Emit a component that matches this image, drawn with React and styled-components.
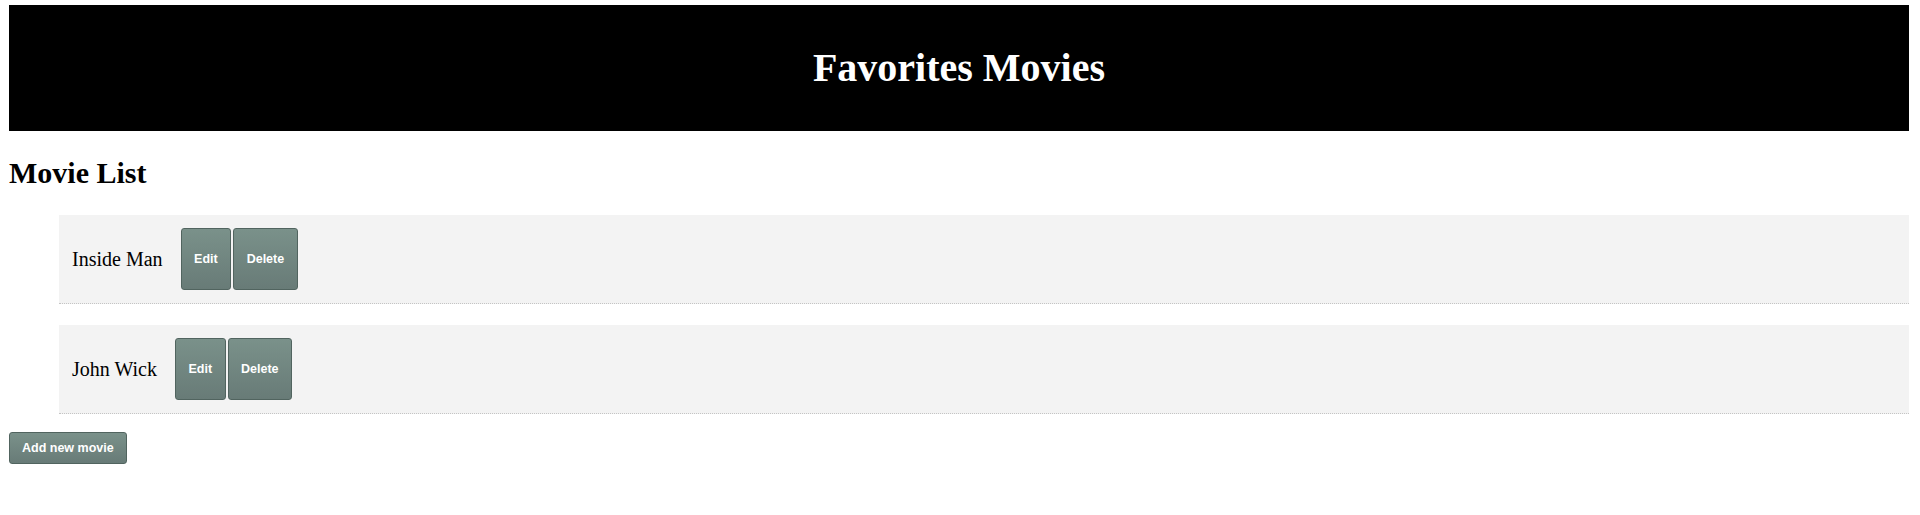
import React from 'react'
import styled, { createGlobalStyle } from 'styled-components'

const GlobalStyle = createGlobalStyle`
  html, body {
    margin: 0;
    padding: 0;
    background: #ffffff;
  }
  body {
    font-family: "Liberation Serif", "Times New Roman", serif;
    color: #000;
  }
`

const movies = [
  { id: 1, title: 'Inside Man' },
  { id: 2, title: 'John Wick' },
]

const App = () => {
  return (
    <Page>
      <GlobalStyle />
      <Header>
        <Title>Favorites Movies</Title>
      </Header>
      <SectionTitle>Movie List</SectionTitle>
      <MovieList>
        {movies.map((movie) => (
          <MovieRow key={movie.id}>
            <MovieName>{movie.title}</MovieName>
            <Actions>
              <ActionButton>Edit</ActionButton>
              <ActionButton>Delete</ActionButton>
            </Actions>
          </MovieRow>
        ))}
      </MovieList>
      <AddButton>Add new movie</AddButton>
    </Page>
  )
}

const Page = styled.div`
  padding: 5px 11px 0 9px;
`

const Header = styled.header`
  height: 126px;
  background: #000;
  display: flex;
  align-items: center;
  justify-content: center;
`

const Title = styled.h1`
  margin: 0;
  color: #fff;
  font-size: 40px;
  font-weight: bold;
  line-height: 1.15;
`

const SectionTitle = styled.h2`
  margin: 25px 0;
  font-size: 30px;
  font-weight: bold;
`

const MovieList = styled.ul`
  list-style: none;
  margin: 0;
  padding: 0 0 0 50px;
  display: flex;
  flex-direction: column;
  gap: 21px;
`

const MovieRow = styled.li`
  height: 88px;
  display: flex;
  align-items: center;
  gap: 18px;
  padding: 0 13px;
  background: #f3f3f3;
  border-bottom: 1px dotted #c4c4c4;
`

const MovieName = styled.span`
  font-size: 20px;
`

const Actions = styled.div`
  display: flex;
  gap: 2px;
`

const buttonLook = `
  font-family: "Liberation Sans", Arial, sans-serif;
  font-size: 12.5px;
  font-weight: bold;
  color: #fff;
  background: linear-gradient(to bottom, #7a918a, #687b77);
  border: 1px solid #51645f;
  border-radius: 3px;
  cursor: pointer;
`

const ActionButton = styled.button`
  ${buttonLook}
  height: 62px;
  padding: 0 12.5px;
`

const AddButton = styled.button`
  ${buttonLook}
  display: block;
  margin-top: 18px;
  height: 32px;
  padding: 0 12px;
`

export default App
